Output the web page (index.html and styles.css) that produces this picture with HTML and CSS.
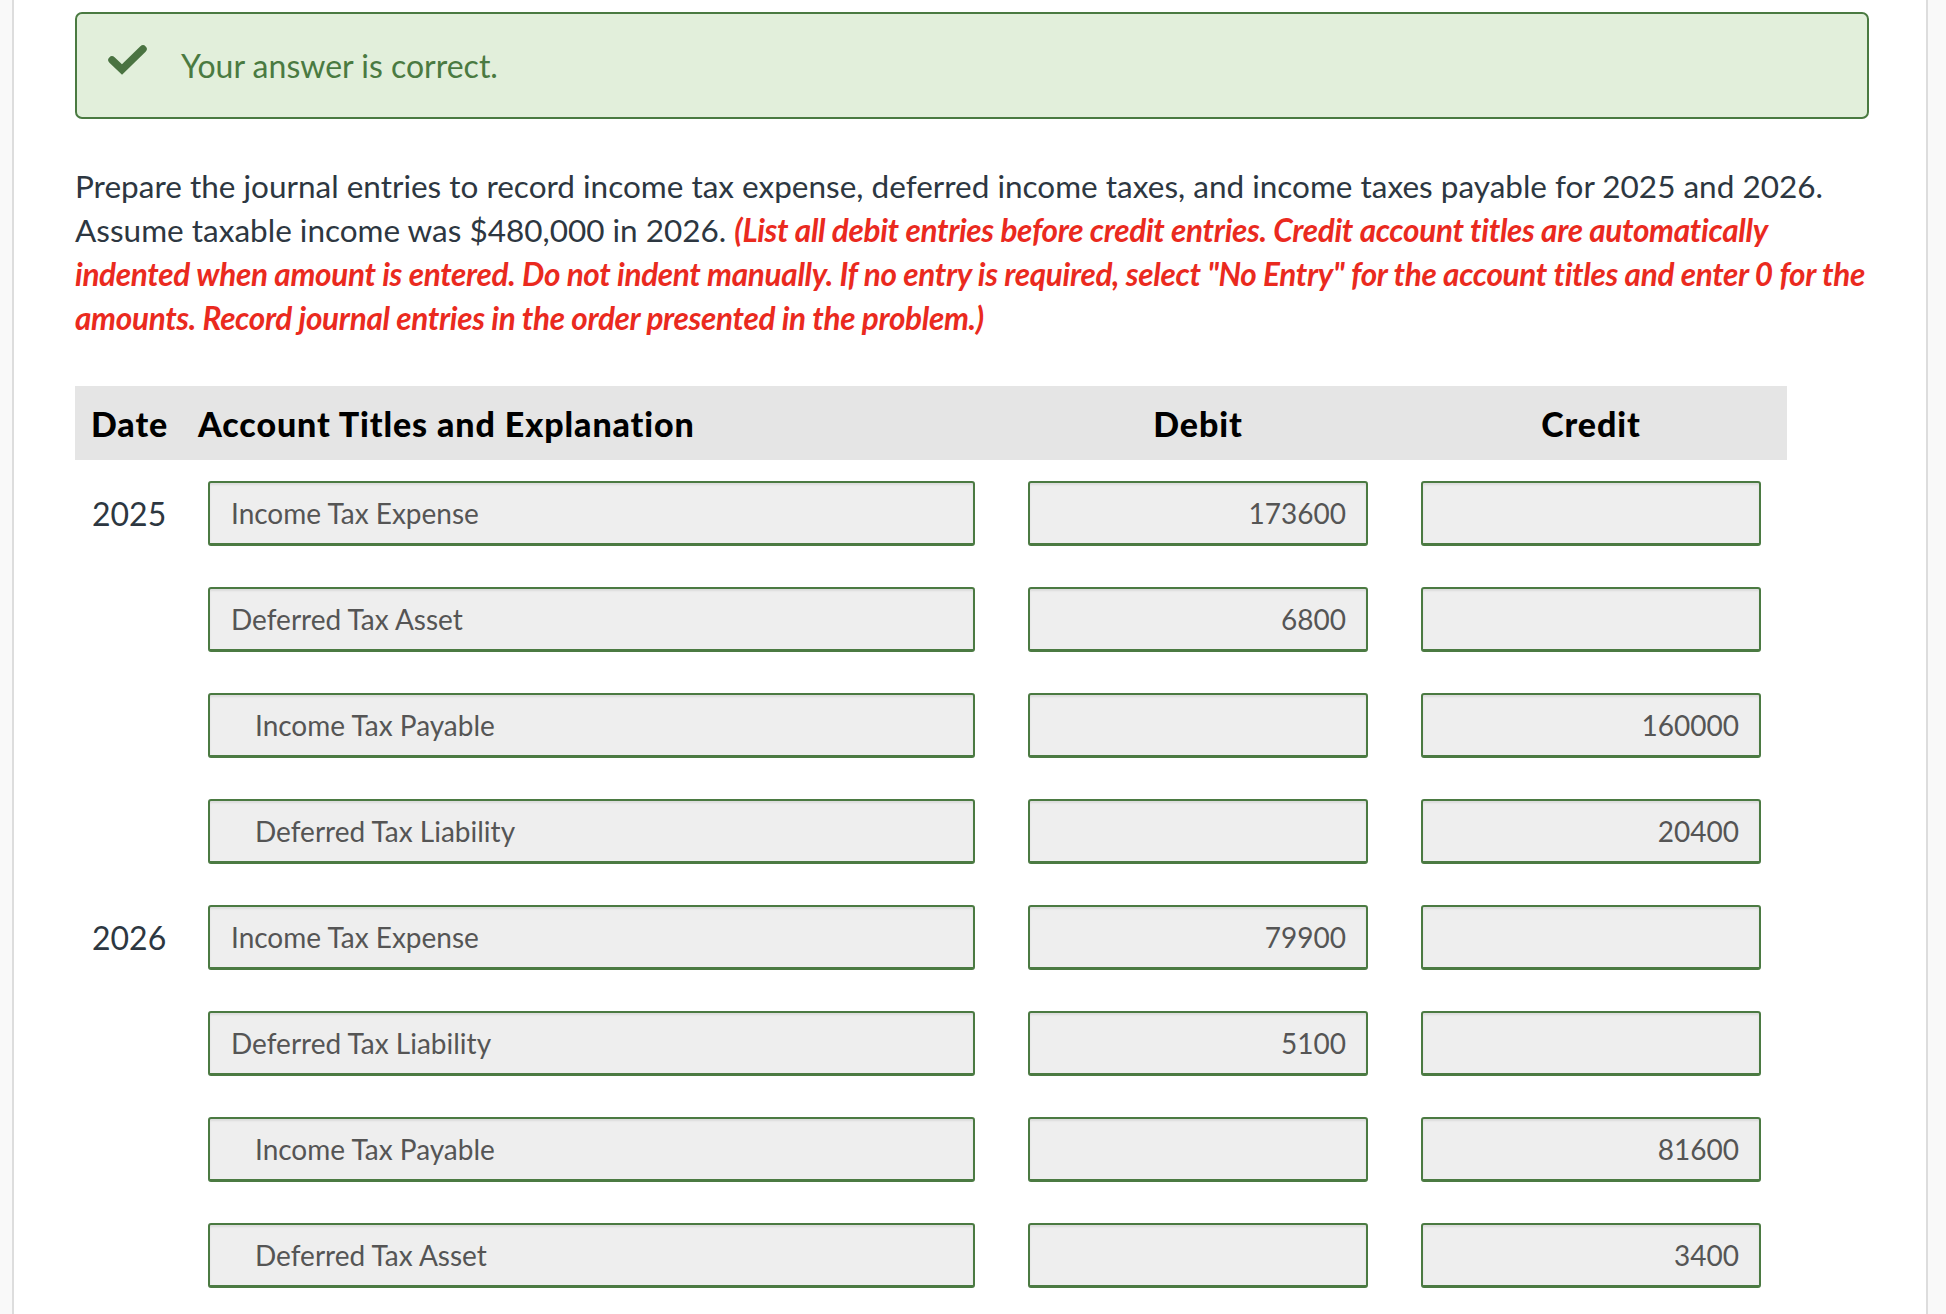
FILE: index.html
```html
<!DOCTYPE html>
<html lang="en">
<head>
<meta charset="utf-8">
<title>Journal Entries</title>
<link rel="stylesheet" href="styles.css">
</head>
<body>
<div class="panel">
  <div class="alert">
    <svg class="check" viewBox="0 0 40 30" width="40" height="30" aria-hidden="true">
      <polyline points="4,15 14,24.5 35,4" fill="none" stroke="#4a7341" stroke-width="7.5" stroke-linecap="round" stroke-linejoin="miter"/>
    </svg>
    <span class="alert-text">Your answer is correct.</span>
  </div>

  <p class="question">Prepare the journal entries to record income tax expense, deferred income taxes, and income taxes payable for 2025 and 2026. Assume taxable income was $480,000 in 2026. <em class="note">(List all debit entries before credit entries. Credit account titles are automatically indented when amount is entered. Do not indent manually. If no entry is required, select "No Entry" for the account titles and enter 0 for the amounts. Record journal entries in the order presented in the problem.)</em></p>

  <div class="journal">
    <div class="head">
      <div class="h-date">Date</div>
      <div class="h-acct">Account Titles and Explanation</div>
      <div class="h-num">Debit</div>
      <div class="h-num">Credit</div>
    </div>

    <div class="row">
      <div class="date">2025</div>
      <div class="box acct">Income Tax Expense</div>
      <div class="box num">173600</div>
      <div class="box num"></div>
    </div>
    <div class="row">
      <div class="date"></div>
      <div class="box acct">Deferred Tax Asset</div>
      <div class="box num">6800</div>
      <div class="box num"></div>
    </div>
    <div class="row">
      <div class="date"></div>
      <div class="box acct indent">Income Tax Payable</div>
      <div class="box num"></div>
      <div class="box num">160000</div>
    </div>
    <div class="row">
      <div class="date"></div>
      <div class="box acct indent">Deferred Tax Liability</div>
      <div class="box num"></div>
      <div class="box num">20400</div>
    </div>
    <div class="row">
      <div class="date">2026</div>
      <div class="box acct">Income Tax Expense</div>
      <div class="box num">79900</div>
      <div class="box num"></div>
    </div>
    <div class="row">
      <div class="date"></div>
      <div class="box acct">Deferred Tax Liability</div>
      <div class="box num">5100</div>
      <div class="box num"></div>
    </div>
    <div class="row">
      <div class="date"></div>
      <div class="box acct indent">Income Tax Payable</div>
      <div class="box num"></div>
      <div class="box num">81600</div>
    </div>
    <div class="row">
      <div class="date"></div>
      <div class="box acct indent">Deferred Tax Asset</div>
      <div class="box num"></div>
      <div class="box num">3400</div>
    </div>
  </div>
</div>
</body>
</html>
```
FILE: styles.css
```css
html, body {
  margin: 0;
  padding: 0;
}
body {
  background: #f9f9f9;
  font-family: Lato, "Open Sans", "Liberation Sans", sans-serif;
  color: #2d3741;
}
.panel {
  margin-left: 12px;
  width: 1916px;
  min-height: 1314px;
  box-sizing: border-box;
  background: #ffffff;
  border-left: 2px solid #dddddd;
  border-right: 2px solid #dddddd;
  padding: 12px 59px 0 61px;
}
.alert {
  box-sizing: border-box;
  height: 107px;
  width: 1794px;
  background: #e2efdb;
  border: 2px solid #4a7a41;
  border-radius: 7px;
  display: flex;
  align-items: center;
  padding-left: 31px;
}
.check {
  width: 40px;
  height: 30px;
  margin-top: -12px;
  flex: none;
}
.alert-text {
  margin-left: 33px;
  font-size: 32px;
  color: #4a7a41;
}
.question {
  margin: 45px 0 0 0;
  font-size: 31.5px;
  line-height: 44px;
  color: #2d3741;
}
.note {
  color: #ea2a1e;
  font-weight: 700;
  font-style: italic;
  letter-spacing: -0.32px;
}
.journal {
  margin-top: 46px;
  width: 1712px;
}
.head {
  display: grid;
  grid-template-columns: 123px 830px 340px 53px 340px 26px;
  align-items: center;
  height: 74px;
  background: #e5e5e5;
  color: #000000;
  font-weight: 900;
  font-size: 34px;
  letter-spacing: 0.9px;
}
.h-date {
  padding-left: 16px;
}
.h-num {
  text-align: center;
}
.head .h-num:nth-child(4) {
  grid-column: 5;
}
.row {
  display: grid;
  grid-template-columns: 133px 767px 53px 340px 53px 340px;
  align-items: center;
  margin-top: 21px;
}
.row + .row {
  margin-top: 41px;
}
.date {
  padding-left: 17px;
  font-size: 32px;
  color: #2d3741;
}
.box {
  box-sizing: border-box;
  height: 65px;
  background: #eeeeee;
  border: 2px solid #4b7a42;
  border-bottom-width: 3px;
  border-radius: 3px;
  box-shadow: inset 0 2px 2px rgba(0, 0, 0, 0.08);
  font-size: 28px;
  color: #555555;
  display: flex;
  align-items: center;
  padding: 0 20px 0 21px;
}
.acct {
  grid-column: 2;
}
.row .box:nth-child(3) {
  grid-column: 4;
}
.row .box:nth-child(4) {
  grid-column: 6;
}
.indent {
  padding-left: 45px;
}
.num {
  justify-content: flex-end;
}
```
